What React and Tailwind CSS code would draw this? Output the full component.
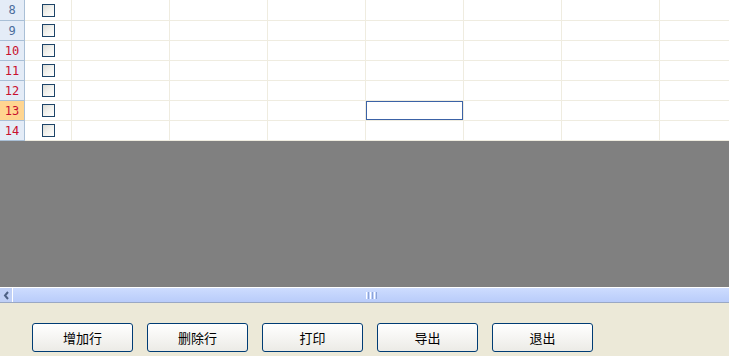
import React from "react";

const rows = [8, 9, 10, 11, 12, 13, 14];
const cols = [0, 1, 2, 3, 4, 5, 6];

function Check() {
  return (
    <div className="w-[13px] h-[13px] border border-[#1d4468] bg-gradient-to-br from-[#dcdcd6] via-[#f2f2ee] to-[#ffffff]" />
  );
}

export default function App() {
  return (
    <div className="w-[729px] h-[356px] flex flex-col overflow-hidden bg-white" style={{ fontFamily: '"Liberation Sans", "Noto Sans CJK SC", sans-serif' }}>
      <div className="flex flex-col">
        {rows.map((r, i) => {
          const sel = r === 13;
          const red = r >= 10;
          return (
            <div key={r} className={`flex ${i === 0 ? "h-[21px]" : "h-[20px]"}`}>
              <div
                className={`w-[25px] shrink-0 border-r border-b border-[#a9bfd6] flex items-center justify-center ${sel ? "bg-[#ffd590]" : "bg-[#e4ecf7]"} ${red ? "text-[#c8102e]" : "text-[#4a6d9c]"}`}
                style={{ fontFamily: '"DejaVu Sans Mono", monospace', fontSize: "12px" }}
              >
                {r}
              </div>
              <div className="w-[47px] shrink-0 border-r border-b border-[#efece0] flex items-center justify-center">
                <Check />
              </div>
              {cols.map((c) => (
                <div key={c} className="w-[98px] shrink-0 border-r border-b border-[#efece0] relative">
                  {sel && c === 3 && (
                    <div className="absolute left-0 top-0 w-[97px] h-[19px] border border-[#3b62a6]" />
                  )}
                </div>
              ))}
            </div>
          );
        })}
      </div>
      <div className="h-[146px] bg-[#808080]" />
      <div className="h-[16px] flex border-t border-white border-b border-b-[#9aa8c4] bg-[#c4d4fc]">
        <div className="w-[13px] shrink-0 bg-[#c0d0f6] flex items-center justify-center border-r border-white">
          <svg width="7" height="9" viewBox="0 0 7 9">
            <path d="M5 1 L2 4.5 L5 8" stroke="#4d6185" strokeWidth="2" fill="none" />
          </svg>
        </div>
        <div className="flex-1 flex items-center justify-center bg-gradient-to-b from-[#cddcfe] to-[#b9ccfa]">
          <div className="flex gap-[1px]">
            <div className="w-[1px] h-[7px] bg-white" />
            <div className="w-[1px] h-[7px] bg-[#8da4d6]" />
            <div className="w-[1px] h-[7px] bg-white" />
            <div className="w-[1px] h-[7px] bg-[#8da4d6]" />
            <div className="w-[1px] h-[7px] bg-white" />
            <div className="w-[1px] h-[7px] bg-[#8da4d6]" />
          </div>
        </div>
      </div>
      <div className="flex-1 bg-[#ece9d8] flex gap-[14px] pl-[32px] pt-[20px]">
        {["增加行", "删除行", "打印", "导出", "退出"].map((t) => (
          <div
            key={t}
            className="w-[101px] h-[29px] rounded-[3px] border border-[#003c74] bg-gradient-to-b from-[#ffffff] to-[#ecebe6] flex items-center justify-center text-[13px] text-black"
            style={{ fontFamily: '"Noto Sans CJK SC", sans-serif' }}
          >
            {t}
          </div>
        ))}
      </div>
    </div>
  );
}
